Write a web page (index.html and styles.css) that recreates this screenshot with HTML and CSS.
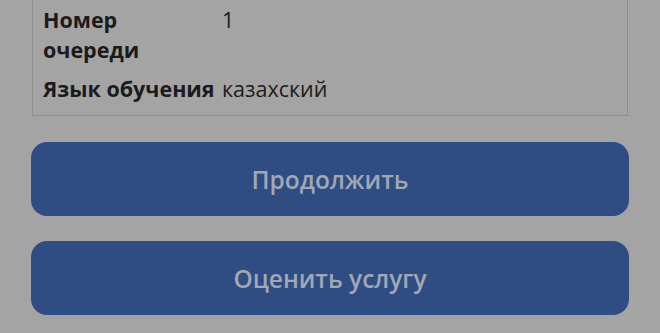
FILE: index.html
```html
<!DOCTYPE html>
<html lang="ru">
<head>
<meta charset="utf-8">
<link rel="stylesheet" href="styles.css">
</head>
<body>
<div class="page">
  <div class="card">
    <div class="row">
      <div class="label">Номер<br>очереди</div>
      <div class="value">1</div>
    </div>
    <div class="row">
      <div class="label">Язык обучения</div>
      <div class="value">казахский</div>
    </div>
  </div>
  <div class="actions">
    <button class="btn">Продолжить</button>
    <button class="btn">Оценить услугу</button>
  </div>
</div>
</body>
</html>
```
FILE: styles.css
```css
html, body {
  margin: 0;
  padding: 0;
  background: #a4a4a4;
}
body {
  font-family: "Open Sans", "Noto Sans", sans-serif;
  color: #1b1b1b;
}
.page {
  padding: 0 31px 0 31px;
  width: 598px;
}
.card {
  margin: -20px 1px 0 1px;
  border: 1px solid #8e8e8e;
  padding: 24px 10px 11px 10px;
  display: flex;
  flex-direction: column;
  gap: 9px;
}
.row {
  display: grid;
  grid-template-columns: 179px 1fr;
  font-size: 21.5px;
  line-height: 30px;
}
.label {
  font-weight: 700;
}
.value {
  font-weight: 400;
}
.actions {
  margin-top: 26px;
  display: flex;
  flex-direction: column;
  gap: 25px;
}
.btn {
  display: block;
  width: 598px;
  height: 74px;
  border: none;
  border-radius: 16px;
  background: #2f4c83;
  color: #a1a7b5;
  font-family: "Open Sans", "Noto Sans", sans-serif;
  font-size: 24.5px;
  font-weight: 600;
  padding: 0;
}
```
